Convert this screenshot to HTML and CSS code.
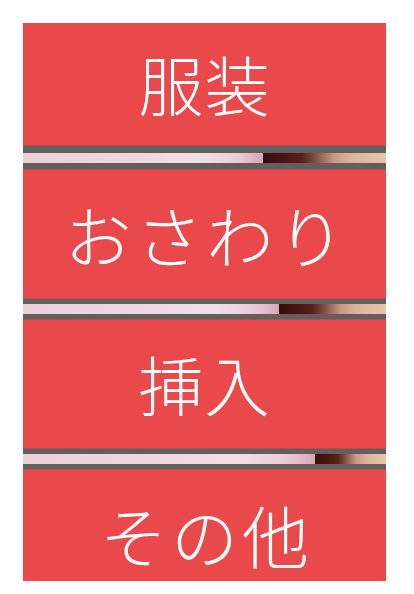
FILE: index.html
```html
<!DOCTYPE html>
<html lang="ja">
<head>
<meta charset="utf-8">
<link rel="stylesheet" href="styles.css">
</head>
<body>
<div class="menu">
  <div class="btn btn-first"><span>服装</span></div>
  <div class="bar"><div class="strip"><div class="fill" style="width:66%"></div><div class="rest"></div></div></div>
  <div class="btn"><span class="kana">おさわり</span></div>
  <div class="bar bar-b"><div class="strip"><div class="fill" style="width:70.5%"></div><div class="rest"></div></div></div>
  <div class="btn"><span>挿入</span></div>
  <div class="bar bar-b"><div class="strip"><div class="fill" style="width:80.5%"></div><div class="rest"></div></div></div>
  <div class="btn"><span class="kana">その他</span></div>
</div>
</body>
</html>
```

FILE: styles.css
```css
html, body {
  margin: 0;
  padding: 0;
  background: #ffffff;
}
.menu {
  margin: 23px 0 0 23px;
  width: 363px;
  height: 558px;
  overflow: hidden;
  display: flex;
  flex-direction: column;
}
.btn {
  flex: 0 0 128px;
  background: #e9494b;
  display: flex;
  align-items: center;
  justify-content: center;
  color: #ffffff;
  font-family: "Noto Sans CJK JP", "Noto Sans", sans-serif;
  font-weight: 300;
  font-size: 65px;
  letter-spacing: 1px;
  line-height: 1;
}
.btn-first {
  flex-basis: 122px;
}
.btn span {
  display: block;
  margin-top: -2px;
}
.btn .kana {
  font-size: 67px;
  letter-spacing: 4px;
  margin-right: -4px;
}
.bar {
  flex: 0 0 23px;
  box-sizing: border-box;
  background: #606060;
  padding: 7px 0 6px 0;
  border-top: 1px solid #b64c4d;
  border-bottom: 1px solid #b64c4d;
}
.bar-b {
  flex-basis: 22px;
  padding: 5px 0 5px 0;
}
.strip {
  height: 10px;
  display: flex;
}
.fill {
  height: 100%;
  background: linear-gradient(to right, #ebd0d7 0%, #eed6dc 40%, #f2dfe3 75%, #ecccd4 90%, #d9a6b4 100%);
}
.rest {
  flex: 1;
  height: 100%;
  background: linear-gradient(to right, #3a0c0c 0%, #4c1312 18%, #5a2119 32%, #8e5a4d 45%, #c99a86 58%, #ddb29c 72%, #e8c6aa 100%);
}
```
